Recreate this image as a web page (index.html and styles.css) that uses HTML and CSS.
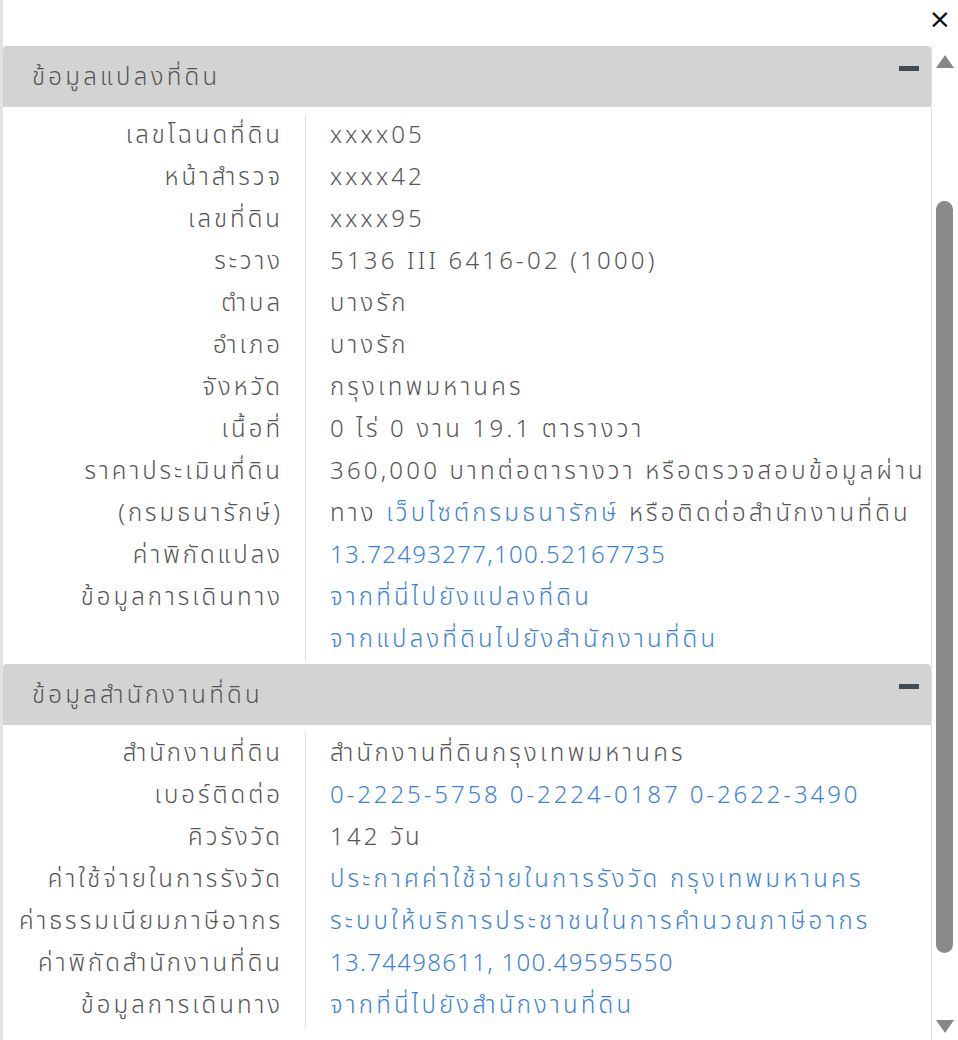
FILE: index.html
```html
<!DOCTYPE html>
<html lang="th">
<head>
<meta charset="utf-8">
<link rel="stylesheet" href="styles.css">
</head>
<body>
<div class="wrap">
  <div class="topbar">
    <span class="close">×</span>
  </div>
  <div class="main">
    <div class="panel">
      <section class="sec">
        <div class="sec-head"><span class="sec-title">ข้อมูลแปลงที่ดิน</span><span class="minus"></span></div>
        <div class="table">
          <div class="lab">เลขโฉนดที่ดิน</div><div class="val">xxxx05</div>
          <div class="lab">หน้าสำรวจ</div><div class="val">xxxx42</div>
          <div class="lab">เลขที่ดิน</div><div class="val">xxxx95</div>
          <div class="lab">ระวาง</div><div class="val">5136 III 6416-02 (1000)</div>
          <div class="lab">ตำบล</div><div class="val">บางรัก</div>
          <div class="lab">อำเภอ</div><div class="val">บางรัก</div>
          <div class="lab">จังหวัด</div><div class="val">กรุงเทพมหานคร</div>
          <div class="lab">เนื้อที่</div><div class="val">0 ไร่ 0 งาน 19.1 ตารางวา</div>
          <div class="lab">ราคาประเมินที่ดิน<br>(กรมธนารักษ์)</div><div class="val">360,000 บาทต่อตารางวา หรือตรวจสอบข้อมูลผ่าน<br>ทาง <a class="lnk">เว็บไซต์กรมธนารักษ์</a> หรือติดต่อสำนักงานที่ดิน</div>
          <div class="lab">ค่าพิกัดแปลง</div><div class="val"><a class="lnk coord">13.72493277,100.52167735</a></div>
          <div class="lab">ข้อมูลการเดินทาง</div><div class="val"><a class="lnk">จากที่นี่ไปยังแปลงที่ดิน</a><br><a class="lnk">จากแปลงที่ดินไปยังสำนักงานที่ดิน</a></div>
        </div>
      </section>
      <section class="sec">
        <div class="sec-head"><span class="sec-title">ข้อมูลสำนักงานที่ดิน</span><span class="minus"></span></div>
        <div class="table">
          <div class="lab">สำนักงานที่ดิน</div><div class="val">สำนักงานที่ดินกรุงเทพมหานคร</div>
          <div class="lab">เบอร์ติดต่อ</div><div class="val phones"><a class="lnk">0-2225-5758</a> <a class="lnk">0-2224-0187</a> <a class="lnk">0-2622-3490</a></div>
          <div class="lab">คิวรังวัด</div><div class="val">142 วัน</div>
          <div class="lab">ค่าใช้จ่ายในการรังวัด</div><div class="val"><a class="lnk">ประกาศค่าใช้จ่ายในการรังวัด กรุงเทพมหานคร</a></div>
          <div class="lab">ค่าธรรมเนียมภาษีอากร</div><div class="val"><a class="lnk">ระบบให้บริการประชาชนในการคำนวณภาษีอากร</a></div>
          <div class="lab">ค่าพิกัดสำนักงานที่ดิน</div><div class="val"><a class="lnk coord">13.74498611, 100.49595550</a></div>
          <div class="lab">ข้อมูลการเดินทาง</div><div class="val"><a class="lnk">จากที่นี่ไปยังสำนักงานที่ดิน</a></div>
        </div>
      </section>
    </div>
    <div class="sbar">
      <div class="arrow up"></div>
      <div class="track"><div class="thumb"></div></div>
      <div class="arrow down"></div>
    </div>
  </div>
</div>
</body>
</html>
```
FILE: styles.css
```css
html, body {
  margin: 0;
  padding: 0;
  background: #fff;
}
body {
  font-family: "Noto Sans Thai", "Noto Sans", "DejaVu Sans", sans-serif;
  font-weight: 300;
  color: #555;
  width: 958px;
  height: 1040px;
  overflow: hidden;
}
.wrap {
  border-left: 3px solid #e2e2e2;
  height: 1040px;
  box-sizing: border-box;
}
.topbar {
  height: 46px;
  display: flex;
  justify-content: flex-end;
  align-items: center;
}
.close {
  font-family: "DejaVu Sans", sans-serif;
  font-weight: 400;
  font-size: 27px;
  line-height: 1;
  color: #111;
  margin-right: 7px;
  margin-top: -10px;
}
.main {
  display: flex;
  height: 994px;
}
.panel {
  width: 928px;
  border-right: 1px solid #e0e0e0;
  flex: none;
}
.sec-head {
  height: 61px;
  background: #d3d3d3;
  border-radius: 4px 4px 0 0;
  display: flex;
  align-items: center;
  justify-content: space-between;
  padding: 0 12px 0 29px;
}
.sec-title {
  font-size: 24px;
  letter-spacing: 3.3px;
  color: #555;
  margin-top: 2px;
}
.minus {
  width: 20px;
  height: 5px;
  background: #414b52;
  margin-top: -16px;
}
.table {
  display: grid;
  grid-template-columns: 302px 1fr;
  padding: 8px 0 3px;
  font-size: 24px;
  letter-spacing: 3.2px;
  line-height: 42px;
}
.lab {
  text-align: right;
  padding-right: 22px;
  letter-spacing: 3px;
}
.val {
  border-left: 1px solid #dcdcdc;
  padding-left: 24px;
  white-space: nowrap;
}
.lnk {
  color: #3b7fdc;
  text-decoration: none;
}
.phones {
  letter-spacing: 2.9px;
}
.coord {
  letter-spacing: 1.3px;
}
.sbar {
  flex: 1;
  display: flex;
  flex-direction: column;
  align-items: center;
}
.arrow {
  width: 0;
  height: 0;
  border-left: 9px solid transparent;
  border-right: 9px solid transparent;
}
.arrow.up {
  border-bottom: 13px solid #888;
  margin-top: 9px;
}
.arrow.down {
  border-top: 13px solid #888;
  margin-bottom: 7px;
}
.track {
  flex: 1;
  width: 100%;
  position: relative;
}
.thumb {
  position: absolute;
  left: 4px;
  width: 17px;
  top: 133px;
  height: 752px;
  background: #8a8a8a;
  border-radius: 9px;
}
```
